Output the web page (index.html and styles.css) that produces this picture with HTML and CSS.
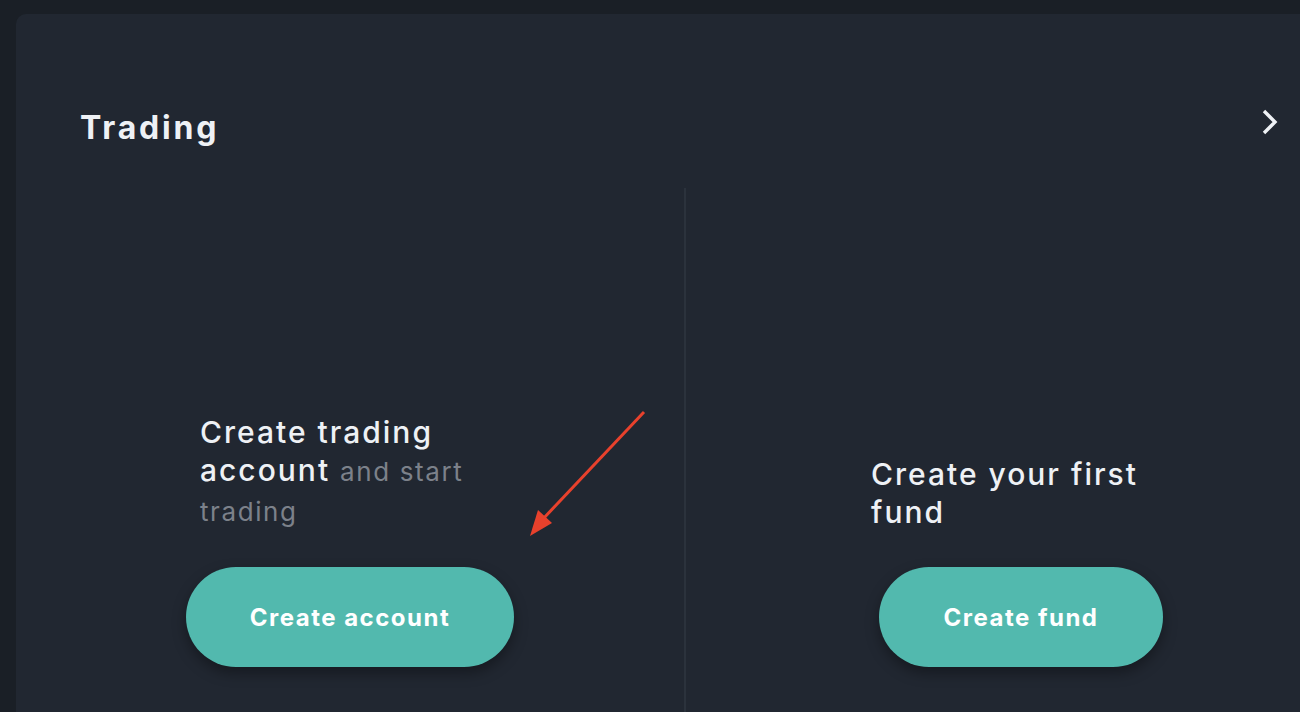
FILE: index.html
```html
<!DOCTYPE html>
<html>
<head>
<meta charset="utf-8">
<link rel="stylesheet" href="styles.css">
</head>
<body>
<div class="page">
  <section class="card">
    <header class="card-head">
      <h2 class="title">Trading</h2>
      <svg class="chev" width="18" height="28" viewBox="0 0 18 28"><path d="M4 3 L15 14 L4 25" fill="none" stroke="#eef1f5" stroke-width="3.4" stroke-linejoin="miter"/></svg>
    </header>
    <div class="cols">
      <div class="col col-left">
        <p class="msg">Create trading account <span class="muted">and start trading</span></p>
        <button class="btn">Create account</button>
      </div>
      <div class="col">
        <p class="msg">Create your first fund</p>
        <button class="btn">Create fund</button>
      </div>
    </div>
  </section>
  <svg class="arrow" width="130" height="140" viewBox="0 0 130 140"><line x1="126" y1="2" x2="24" y2="110" stroke="#e8412c" stroke-width="3"/><path d="M12 126 L20 100 L34 113 Z" fill="#e8412c"/></svg>
</div>
</body>
</html>
```
FILE: styles.css
```css
html, body { margin: 0; padding: 0; }
body {
  background: #1a1f26;
  font-family: "Inter", "Open Sans", sans-serif;
  color: #eef1f5;
  overflow: hidden;
  width: 1300px;
  height: 712px;
}
.page {
  position: relative;
  padding: 14px 0 0 16px;
}
.card {
  width: 1340px;
  background: #212731;
  border-radius: 10px 10px 0 0;
}
.card-head {
  height: 174px;
  box-sizing: border-box;
  padding: 94px 78px 0 64px;
  display: flex;
  justify-content: space-between;
  align-items: flex-start;
}
.title {
  margin: 0;
  font-size: 32px;
  line-height: 40px;
  font-weight: 700;
  letter-spacing: 2.8px;
}
.chev { margin-top: 0; }
.cols { display: flex; }
.col {
  width: 670px;
  height: 524px;
  box-sizing: border-box;
  padding-bottom: 45px;
  display: flex;
  flex-direction: column;
  align-items: center;
  justify-content: flex-end;
}
.col-left { border-right: 2px solid #2b323c; }
.msg {
  width: 300px;
  margin: 0 0 36px;
  font-size: 30px;
  line-height: 38px;
  font-weight: 500;
  letter-spacing: 2px;
}
.muted {
  color: #7c818a;
  font-size: 26px;
  font-weight: 400;
  letter-spacing: 1.6px;
}
.btn {
  height: 100px;
  padding: 0 64px;
  border: 0;
  border-radius: 50px;
  background: #52b9ae;
  color: #ffffff;
  font-family: inherit;
  font-size: 24px;
  font-weight: 700;
  letter-spacing: 1.5px;
  box-shadow: 0 6px 14px rgba(0,0,0,0.35);
}
.arrow {
  position: absolute;
  left: 518px;
  top: 410px;
}
```
